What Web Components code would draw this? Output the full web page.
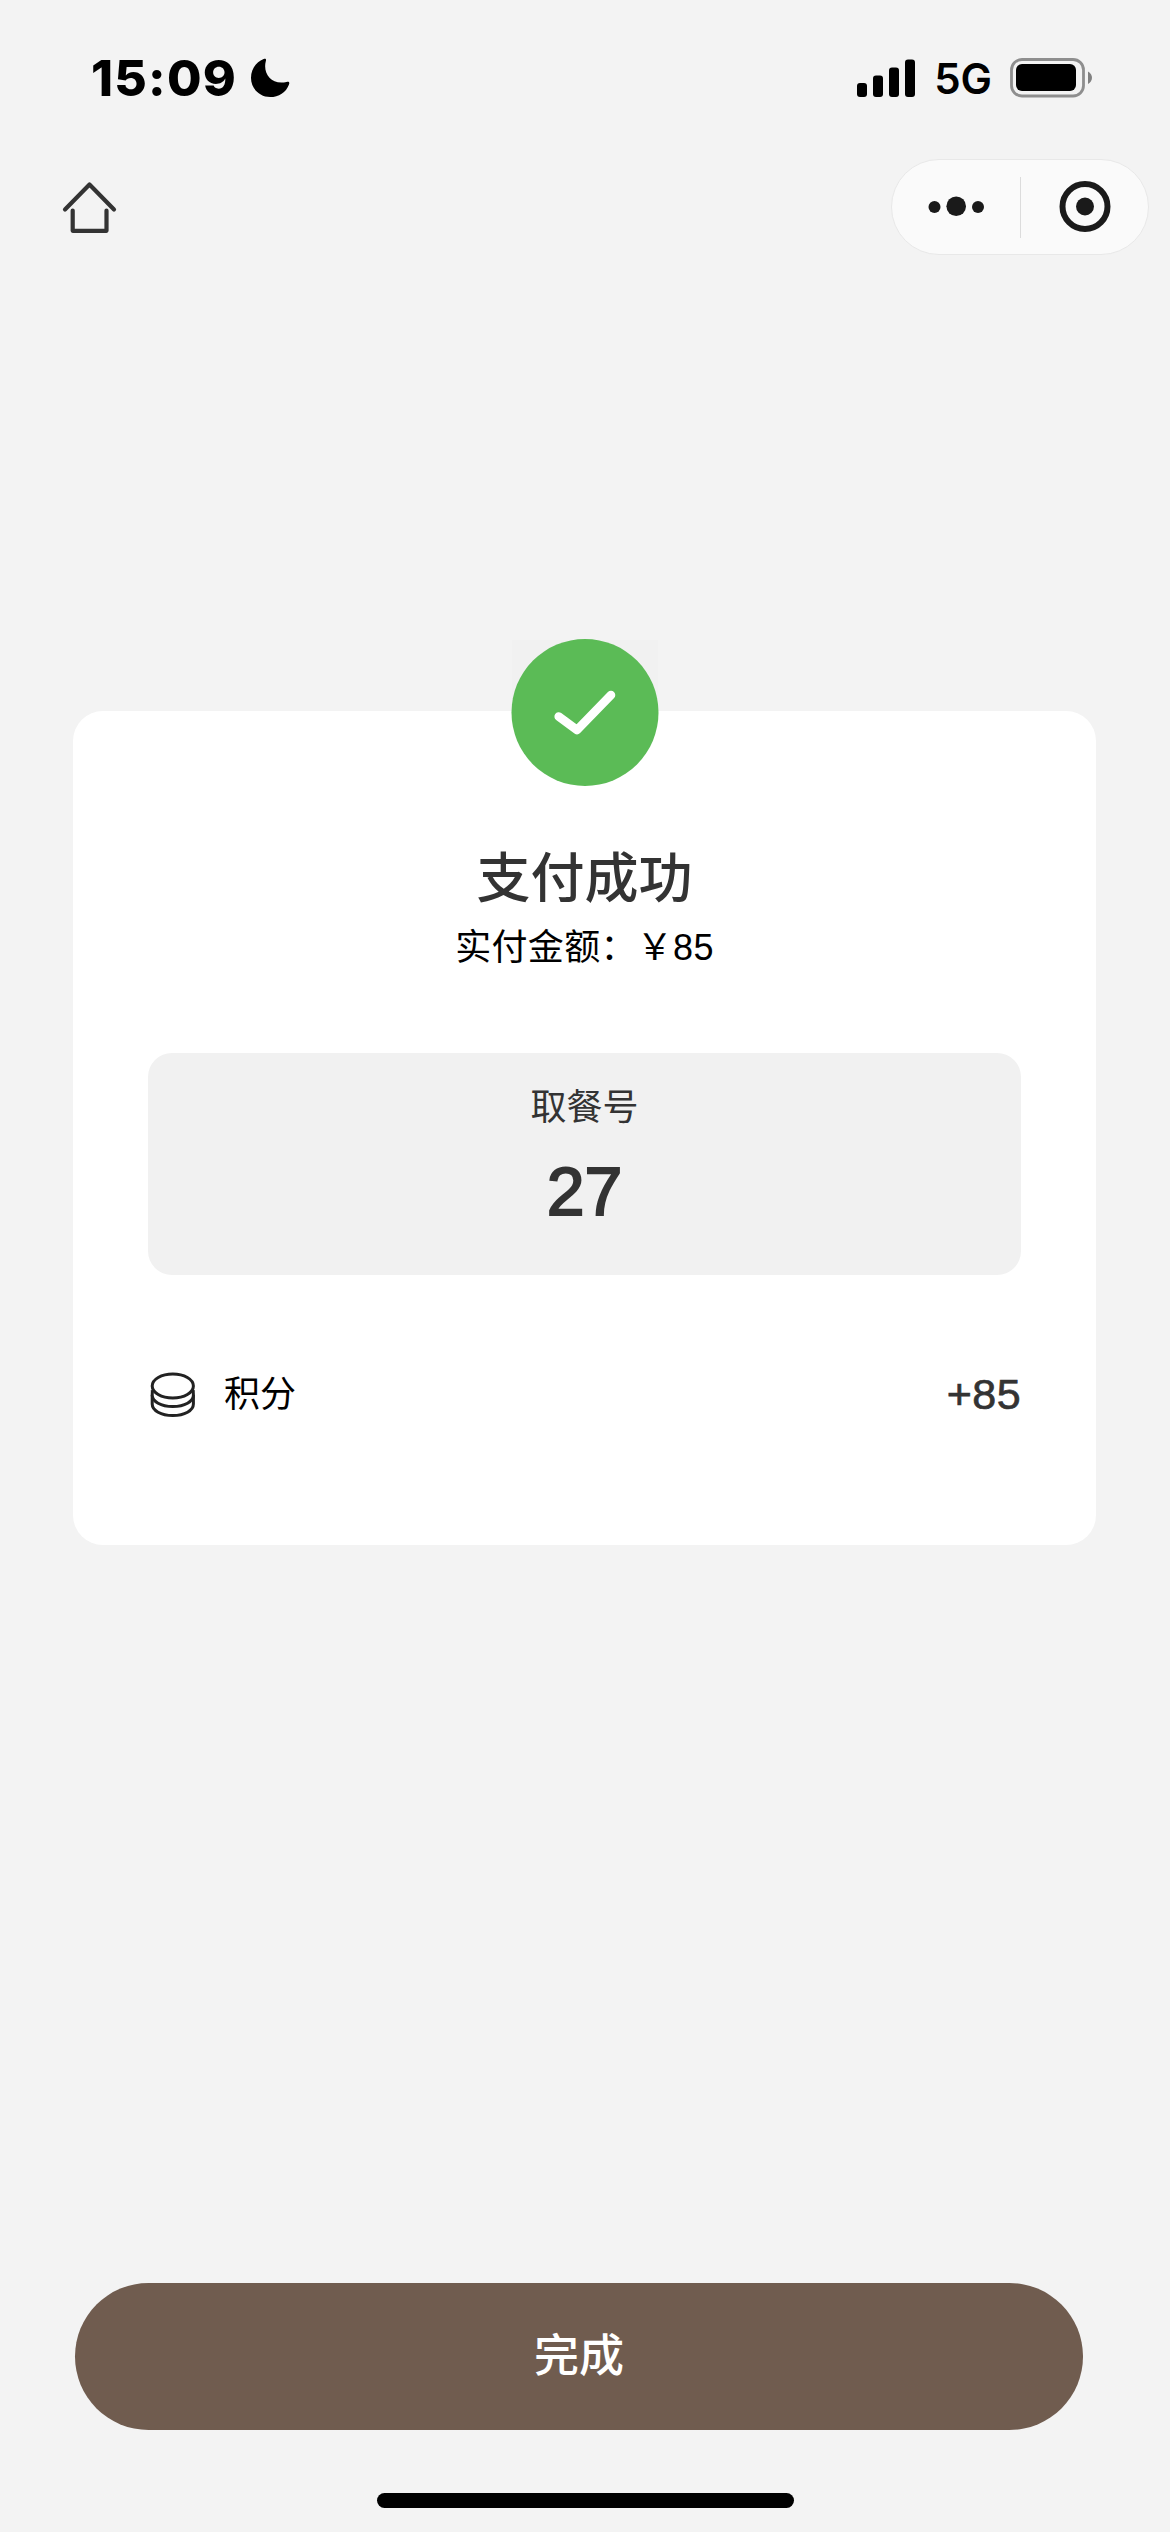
<!DOCTYPE html>
<html lang="zh-CN">
<head>
<meta charset="utf-8">
<title>支付成功</title>
<style>
  html, body {
    margin: 0;
    background: #f3f3f3;
  }
  body {
    font-family: "Liberation Sans", "Noto Sans CJK SC", sans-serif;
    color: #333;
  }
</style>
</head>
<body>
<pay-page>
  <status-bar slot="top" time="15:09" network="5G"></status-bar>
  <nav-bar slot="top"></nav-bar>
  <result-card>
    <span slot="title">支付成功</span>
    <span slot="amount">实付金额&#xFF1A;&#xFFE5;85</span>
    <pickup-number label="取餐号">27</pickup-number>
    <points-row label="积分">+85</points-row>
  </result-card>
  <done-button slot="bottom">完成</done-button>
</pay-page>

<script>
const define = (tag, createHTML) => {
  customElements.define(tag, class extends HTMLElement {
    connectedCallback() {
      if (this.shadowRoot) return
      this.attachShadow({mode: 'open'}).innerHTML = createHTML(this)
    }
  })
}

define("pay-page", () => `
<style>
  :host {
    display: flex;
    flex-direction: column;
    width: 1170px;
    height: 2532px;
    overflow: hidden;
  }
  main {
    flex: 1;
    padding: 455px 74px 0 73px;
  }
  footer {
    display: flex;
    flex-direction: column;
    gap: 63px;
    padding: 0 0 24px 75px;
  }
  .home-indicator {
    width: 417px;
    height: 15px;
    margin-left: 302px;
    border-radius: 8px;
    background: #000;
  }
</style>
<slot name="top"></slot>
<main><slot></slot></main>
<footer>
  <slot name="bottom"></slot>
  <div class="home-indicator"></div>
</footer>
`)

define("status-bar", (el) => `
<style>
  :host {
    display: flex;
    align-items: center;
    justify-content: space-between;
    height: 156px;
    box-sizing: border-box;
    padding: 0 78px 0 91px;
    font-family: Inter, "Liberation Sans", sans-serif;
    color: #000;
  }
  .left, .right {
    display: flex;
    align-items: center;
  }
  .time {
    width: 159px;
    font-size: 50px;
    font-weight: 800;
    line-height: 60px;
    letter-spacing: 1.2px;
    white-space: nowrap;
  }
  .network {
    margin: 2px 18px 0 19px;
    font-size: 42px;
    font-weight: 600;
    line-height: 50px;
  }
  svg { display: block; }
</style>
<div class="left">
  <span class="time">${el.getAttribute("time")}</span>
  <svg width="40" height="40" viewBox="0 0 40 40">
    <path d="M13.6 1C15.6 .2 16.6 1.2 15.8 3.2C12.6 15.5 21.5 27.5 36.500 24C38.8 23.3 39.8 24.3 39 26.4C36 34.5 28.8 39 20.2 39C9.5 39 1 30.5 1 20C1 11.5 6 3.9 13.6 1Z"/>
  </svg>
</div>
<div class="right">
  <svg width="58" height="38" viewBox="0 0 58 38">
    <rect x="0" y="24" width="10" height="14" rx="3"/>
    <rect x="16" y="16.500" width="10" height="21.500" rx="3"/>
    <rect x="32" y="8.500" width="10" height="29.500" rx="3"/>
    <rect x="48" y="0.500" width="10" height="37.500" rx="3"/>
  </svg>
  <span class="network">${el.getAttribute("network")}</span>
  <svg width="82" height="40" viewBox="0 0 82 40">
    <rect x="1.500" y="1.500" width="72" height="36.500" rx="10.500" fill="none" stroke="#8e8e8e" stroke-width="2.800"/>
    <rect x="6" y="6" width="60" height="27" rx="6"/>
    <path d="M78 13.500C83.300 16 83.300 23.500 78 26Z" fill="#808080"/>
  </svg>
</div>
`)

define("nav-bar", () => `
<style>
  :host {
    display: flex;
    align-items: flex-start;
    justify-content: space-between;
    height: 100px;
    box-sizing: border-box;
    padding: 3px 21px 0 60px;
  }
  .home {
    display: block;
    margin-top: 20px;
  }
  .capsule {
    display: flex;
    align-items: center;
    box-sizing: border-box;
    width: 258px;
    height: 96px;
    border: 1px solid #e8e8e8;
    border-radius: 48px;
    background: #fafafa;
  }
  .capsule svg { display: block; }
  .divider {
    width: 1px;
    height: 61px;
    background: #dcdcdc;
  }
</style>
<svg class="home" width="60" height="58" viewBox="60 179 60 58" fill="none" stroke="#333" stroke-width="4.200" stroke-linecap="round" stroke-linejoin="round">
  <path d="M65 209.500L89.500 184.500L114 209.500"/>
  <path d="M72.700 210.500V230.800H106.500V210.500"/>
</svg>
<div class="capsule">
  <svg width="128" height="94" viewBox="892 160 128 94" fill="#1a1a1a">
    <circle cx="934.500" cy="207" r="6"/>
    <circle cx="956.200" cy="206.200" r="9.800"/>
    <circle cx="978" cy="207" r="6"/>
  </svg>
  <div class="divider"></div>
  <svg width="127" height="94" viewBox="1021 160 127 94" fill="#1a1a1a">
    <circle cx="1085" cy="206.500" r="22.500" fill="none" stroke="#1a1a1a" stroke-width="6"/>
    <circle cx="1085" cy="206.500" r="9"/>
  </svg>
</div>
`)

define("result-card", () => `
<style>
  :host {
    display: flex;
    flex-direction: column;
    align-items: center;
    position: relative;
    box-sizing: border-box;
    height: 834px;
    padding: 129px 75px 0;
    border-radius: 30px;
    background: #fff;
  }
  /* the badge straddles the top edge of the card */
  .badge {
    position: absolute;
    top: -72px;
    left: 438px;
  }
  .title {
    font-size: 54px;
    font-weight: 500;
    line-height: 78px;
  }
  .amount {
    margin: 1px 0 77px;
    font-size: 36px;
    line-height: 57px;
    letter-spacing: 0.3px;
    color: #000;
    white-space: nowrap;
  }
</style>
<svg class="badge" width="148" height="148" viewBox="0 0 148 148">
  <rect x="1" y="1" width="146" height="71" fill="#f1f1f1"/>
  <circle cx="74" cy="73.500" r="73.500" fill="#5bbb56"/>
  <path d="M47.700 77.500L66 91L100 56" fill="none" stroke="#fff" stroke-width="8.600" stroke-linecap="round" stroke-linejoin="round"/>
</svg>
<div class="title"><slot name="title"></slot></div>
<div class="amount"><slot name="amount"></slot></div>
<slot></slot>
`)

define("pickup-number", (el) => `
<style>
  :host {
    display: flex;
    flex-direction: column;
    align-items: center;
    align-self: stretch;
    box-sizing: border-box;
    height: 222px;
    padding-top: 28px;
    border-radius: 24px;
    background: #f1f1f1;
  }
  .label {
    font-size: 36px;
    line-height: 54px;
  }
  .number {
    margin-top: 18px;
    font-size: 68px;
    line-height: 76px;
    -webkit-text-stroke: 2px #333;
  }
</style>
<div class="label">${el.getAttribute("label")}</div>
<div class="number"><slot></slot></div>
`)

define("points-row", (el) => `
<style>
  :host {
    display: flex;
    align-items: center;
    align-self: stretch;
    margin-top: 90px;
    height: 60px;
  }
  svg {
    display: block;
    margin-right: 26px;
  }
  .label {
    flex: 1;
    font-size: 36px;
    line-height: 54px;
    color: #000;
  }
  .value {
    margin-top: -2px;
    font-size: 43px;
    line-height: 50px;
    letter-spacing: 0.4px;
    -webkit-text-stroke: 0.7px #333;
  }
</style>
<svg width="50" height="50" viewBox="148 1370 50 50" fill="#fff" stroke="#222" stroke-width="3">
  <path d="M152.200 1395V1404C152.200 1410.500 161 1415.500 172.800 1415.500S193.400 1410.500 193.400 1404V1395"/>
  <path d="M152.200 1390C152.600 1392 152.200 1393 152.200 1395C152.200 1401.500 161 1406.500 172.800 1406.500S193.400 1401.500 193.400 1395C193.400 1393 193 1392 193.400 1390"/>
  <ellipse cx="172.800" cy="1386" rx="20.600" ry="12"/>
</svg>
<div class="label">${el.getAttribute("label")}</div>
<div class="value"><slot></slot></div>
`)

define("done-button", () => `
<style>
  :host {
    display: flex;
    align-items: center;
    justify-content: center;
    width: 1008px;
    height: 147px;
    border-radius: 74px;
    background: #705c4f;
    color: #fff;
    font-size: 45px;
    font-weight: 500;
    line-height: 64px;
  }
</style>
<slot></slot>
`)
</script>
</body>
</html>
